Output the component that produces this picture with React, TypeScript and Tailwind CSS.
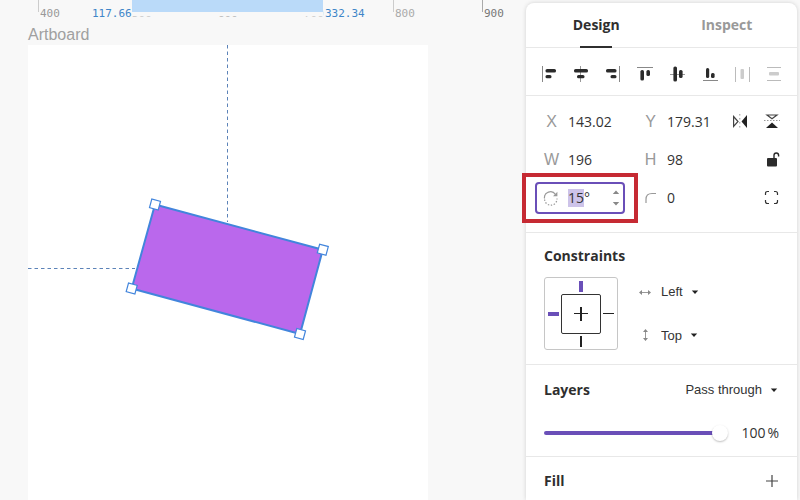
import { useEffect, useRef, type ReactNode } from "react";

const PURPLE = "#6a4fb8";
const BLUE = "#4285dc";

function Bar({ x, y, w, h, c = "#2b2b2b", r = 0 }: { x: number; y: number; w: number; h: number; c?: string; r?: number }) {
  return <rect x={x} y={y} width={w} height={h} rx={r} fill={c} />;
}

const alignments: { label: string; disabled?: boolean; art: ReactNode }[] = [
  { label: "Align left", art: <><Bar x={1} y={0} w={1} h={16} c="#888" /><Bar x={4.5} y={3} w={10.5} h={3.6} r={1.6} /><Bar x={4.5} y={9} w={6} h={3.2} r={1.5} /></> },
  { label: "Align horizontal centers", art: <><Bar x={7} y={0} w={1} h={16} c="#999" /><Bar x={1} y={3} w={14} h={3.6} r={1.6} /><Bar x={4} y={9} w={7.5} h={3.2} r={1.5} /></> },
  { label: "Align right", art: <><Bar x={14} y={0} w={1} h={16} c="#888" /><Bar x={1} y={3} w={10.5} h={3.6} r={1.6} /><Bar x={5.5} y={9} w={6} h={3.2} r={1.5} /></> },
  { label: "Align top", art: <><Bar x={0} y={1} w={16} h={1} c="#888" /><Bar x={3.4} y={4} w={3.6} h={10.5} r={1.6} /><Bar x={9.4} y={4} w={3.6} h={6} r={1.6} /></> },
  { label: "Align vertical centers", art: <><Bar x={0} y={8} w={15} h={1} c="#999" /><Bar x={3.4} y={0.5} w={3.6} h={15} r={1.6} /><Bar x={9} y={4} w={3.6} h={8} r={1.6} /></> },
  { label: "Align bottom", art: <><Bar x={1} y={14} w={15} h={1} c="#888" /><Bar x={4} y={2} w={3.2} h={10} r={1.5} /><Bar x={9} y={7} w={3.6} h={5} r={1.5} /></> },
  { label: "Distribute horizontally", disabled: true, art: <><Bar x={1} y={1} w={1} h={15} c="#bbb" /><Bar x={6.5} y={3} w={3.5} h={10} c="#ccc" r={1} /><Bar x={15} y={1} w={1} h={15} c="#bbb" /></> },
  { label: "Distribute vertically", disabled: true, art: <><Bar x={1} y={1} w={14} h={1} c="#bbb" /><Bar x={3} y={6} w={10} h={3.5} c="#ccc" r={1} /><Bar x={1} y={14} w={14} h={1} c="#bbb" /></> },
];

function Caret() {
  return (
    <svg className="pointer-events-none -ml-2 h-2 w-2" viewBox="0 0 8 8" aria-hidden="true">
      <path d="M.8 2.5h6.4L4 6z" fill="#222" />
    </svg>
  );
}

function Dropdown({ label, options }: { label: string; options: string[] }) {
  return (
    <span className="flex items-center">
      <select
        aria-label={label}
        className="appearance-none bg-transparent pr-4 font-['Liberation_Sans',Arial,sans-serif] text-[13px] text-[#333] [field-sizing:content]"
      >
        {options.map((o) => <option key={o}>{o}</option>)}
      </select>
      <Caret />
    </span>
  );
}

function Field({ label, name, value }: { label: ReactNode; name: string; value: string }) {
  return (
    <label className="flex h-[38px] items-center">
      <span className="flex w-[33px] justify-center font-['Liberation_Sans',Arial,sans-serif] text-base text-[#999]">{label}</span>
      <input aria-label={name} defaultValue={value} className="w-14 bg-transparent text-sm text-[#333] outline-none" />
    </label>
  );
}

function RotationField() {
  const input = useRef<HTMLInputElement>(null);
  useEffect(() => {
    input.current?.focus();
    input.current?.setSelectionRange(0, 2);
  }, []);
  return (
    <div className="relative flex h-[38px] w-[90px] items-center">
      <label className="flex h-8 w-full items-center rounded border-2 border-[#6a4fb8] bg-white">
        <svg className="ml-[6px] h-4 w-4" viewBox="0 0 16 16" fill="none" stroke="#999" aria-hidden="true">
          <path d="M1.5 8.5A6 6 0 0 1 12.5 4.5" strokeWidth="1.2" />
          <path d="M14.4 1.8v4.5H10z" fill="#999" stroke="none" />
          <path d="M1.6 9.5A6.2 6.2 0 0 0 14 8.5" strokeWidth="1.2" strokeDasharray="1.4 1.6" />
        </svg>
        <input
          ref={input}
          aria-label="Rotation"
          defaultValue="15°"
          className="ml-[9px] w-11 bg-transparent text-sm leading-[18px] text-[#333] outline-none selection:bg-[#cdc3e9] selection:text-[#333]"
        />
        <svg className="h-5 w-2" viewBox="0 0 8 20" fill="#888" aria-hidden="true">
          <path d="M.8 6h6.4L4 2.500zM.8 14h6.4L4 17.500z" />
        </svg>
      </label>
      <span className="pointer-events-none absolute -inset-x-[13px] -inset-y-[6px] border-4 border-[#c62a33]" />
    </div>
  );
}

function IconButton({ label, children }: { label: string; children: ReactNode }) {
  return (
    <button aria-label={label} className="flex h-[38px] w-8 items-center justify-center">
      <svg className="h-4 w-4" viewBox="0 0 16 16" aria-hidden="true">{children}</svg>
    </button>
  );
}

function Section({ className, children }: { className: string; children: ReactNode }) {
  return <section className={`border-b border-[#e8e8e8] ${className}`}>{children}</section>;
}

function Heading({ children }: { children: ReactNode }) {
  return <h2 className="text-sm leading-5 font-bold text-[#2f2f2f]">{children}</h2>;
}

function Ruler() {
  return (
    <div className="relative h-5 shrink-0 font-['DejaVu_Sans_Mono',monospace] text-[11px] leading-3 text-[#999]">
      <span className="absolute top-0 left-[38px] h-3 w-px bg-[#ccc]" />
      <span className="absolute top-2 left-10">400</span>
      <span className="absolute top-2 left-[132px] text-[#ccc]">500</span>
      <span className="absolute top-2 left-[218px] text-[#bbb]">600</span>
      <span className="absolute top-2 left-[304px] text-[#ccc]">700</span>
      <span className="absolute top-0 left-[393px] h-3 w-px bg-[#ccc]" />
      <span className="absolute top-2 left-[395px] text-[#aaa]">800</span>
      <span className="absolute top-0 left-[482px] h-3 w-px bg-[#aaa]" />
      <span className="absolute top-2 left-[484px] text-[#777]">900</span>
      <span className="absolute top-0 left-[132px] h-4 w-[191px] border-b-4 border-[#f8f8f8] bg-[#badaf9]" />
      <span className="absolute top-2 left-[92px] text-[#3f86c8]">117.66</span>
      <span className="absolute top-2 left-[325px] text-[#3f86c8]">332.34</span>
    </div>
  );
}

function Drawing() {
  const corners = [[127, 159.5], [294.8, 204.7], [272, 289], [103.7, 243.5]];
  return (
    <svg className="h-[455px] w-[400px]" viewBox="0 0 400 455" role="img" aria-label="Rotated rectangle">
      <path d="M199.5 0V177M0 223.5H107" stroke="#5c83b8" strokeDasharray="3.5 3" fill="none" />
      <polygon points={corners.map((c) => c.join(",")).join(" ")} fill="#ba68ec" stroke={BLUE} strokeWidth="2" />
      {corners.map(([x, y]) => (
        <rect key={x} x={x - 4.5} y={y - 4.5} width="9" height="9" fill="#fff" stroke={BLUE} strokeWidth="1.2" transform={`rotate(15 ${x} ${y})`} />
      ))}
    </svg>
  );
}

export default function App() {
  return (
    <div className="flex h-screen overflow-hidden bg-[#f8f8f8] font-['Open_Sans','Noto_Sans',sans-serif]">
      <main className="flex min-w-0 flex-1 flex-col overflow-hidden">
        <Ruler />
        <div className="pt-[5px] pl-7">
          <h1 className="font-['Liberation_Sans',Arial,sans-serif] text-base leading-5 text-[#a0a0a0]">Artboard</h1>
          <div className="w-[400px] bg-white"><Drawing /></div>
        </div>
      </main>

      <aside className="mt-[3px] mr-[3px] w-[271px] shrink-0 rounded-t-lg bg-white shadow-[0_0_4px_rgba(0,0,0,0.16)]">
        <div role="tablist" className="flex h-[45px] items-stretch border-b border-[#e8e8e8] px-[5px] text-sm">
          <button role="tab" aria-selected="true" className="relative flex-1 font-bold text-[#2f2f2f]">
            Design
            <span className="absolute -bottom-px left-1/2 h-[2px] w-8 -translate-x-1/2 bg-[#2f2f2f]" />
          </button>
          <button role="tab" aria-selected="false" className="flex-1 font-bold text-[#999]">Inspect</button>
        </div>

        <Section className="flex h-12 items-center justify-between px-[7px] pt-1">
          {alignments.map((a) => (
            <button key={a.label} aria-label={a.label} disabled={a.disabled} className="flex h-8 w-8 items-center justify-center">
              <svg className="h-4 w-4" viewBox="0 0 16 16" aria-hidden="true">{a.art}</svg>
            </button>
          ))}
        </Section>

        <Section className="grid grid-cols-[99px_90px_32px_32px] pt-[7px] pb-[15px] pl-[9px]">
          <Field label="X" name="X position" value="143.02" />
          <Field label="Y" name="Y position" value="179.31" />
          <IconButton label="Flip horizontally">
            <path d="M1.600 2.500l4.400 5-4.400 5z" fill="none" stroke="#444" strokeWidth="1.200" />
            <path d="M15 1v13L9.500 7.500z" fill="#222" />
            <path d="M7.800 0v15" stroke="#999" strokeDasharray="1.500 2.500" />
          </IconButton>
          <IconButton label="Flip vertically">
            <path d="M3 1h10L8 4.800z" fill="none" stroke="#444" strokeWidth="1.200" />
            <path d="M2 14h12L8 8.500z" fill="#222" />
            <path d="M0 6.500h16" stroke="#999" strokeDasharray="1.500 1.500" />
          </IconButton>
          <Field label="W" name="Width" value="196" />
          <Field label="H" name="Height" value="98" />
          <span />
          <IconButton label="Unlock proportions">
            <rect x="3" y="6" width="10" height="8.500" rx="1" fill="#2b2b2b" />
            <path d="M10 6.500V3.300a2.300 2.300 0 0 1 4.600 0V4.500" fill="none" stroke="#2b2b2b" strokeWidth="1.400" />
          </IconButton>
          <RotationField />
          <Field
            name="Corner radius"
            value="0"
            label={
              <svg className="h-4 w-4" viewBox="0 0 16 16" fill="none" stroke="#999" aria-hidden="true">
                <path d="M3 13V9.500Q3 3.500 9 3.500H13" strokeWidth="1.200" />
              </svg>
            }
          />
          <span />
          <IconButton label="Edit corners separately">
            <path d="M1.500 5V3.500q0-2 2-2H5M10 1.500h1.500q2 0 2 2V5M13.500 10v1.500q0 2-2 2H10M5 13.500H3.500q-2 0-2-2V10" fill="none" stroke="#333" strokeWidth="1.200" />
          </IconButton>
        </Section>

        <Section className="px-[18px] pt-[13px] pb-[13px]">
          <Heading>Constraints</Heading>
          <div className="mt-[11px] flex">
            <svg className="h-[74px] w-[74px]" viewBox="0 0 74 74" fill="none" role="img" aria-label="Pinned left and top">
              <rect x=".5" y=".5" width="73" height="72" rx="2.500" stroke="#c6c6c6" />
              <rect x="17.500" y="17.500" width="39" height="39" rx="1.500" stroke="#333" />
              <Bar x={35} y={4} w={4} h={11} c={PURPLE} />
              <Bar x={4} y={35} w={11} h={4} c={PURPLE} />
              <Bar x={59} y={36} w={11} h={1} c="#222" />
              <Bar x={36} y={59} w={2} h={11} c="#222" />
              <Bar x={30} y={36} w={14} h={1} c="#222" />
              <Bar x={36} y={30} w={2} h={14} c="#222" />
            </svg>
            <div className="ml-[19px] flex flex-col justify-between pt-[5px] pb-[6px]">
              <div className="flex items-center gap-2">
                <svg className="h-4 w-4" viewBox="0 0 16 16" aria-hidden="true">
                  <path d="M4 8.500h8" stroke="#999" /><path d="M2 8.500l3-2.500v5zM14 8.500l-3-2.500v5z" fill="#888" />
                </svg>
                <Dropdown label="Horizontal constraint" options={["Left", "Right", "Center", "Scale"]} />
              </div>
              <div className="flex items-center gap-2">
                <svg className="h-4 w-4" viewBox="0 0 16 16" aria-hidden="true">
                  <path d="M8.500 4v8" stroke="#999" /><path d="M8.500 2l-2.500 3h5zM8.500 14l-2.500-3h5z" fill="#888" />
                </svg>
                <Dropdown label="Vertical constraint" options={["Top", "Bottom", "Center", "Scale"]} />
              </div>
            </div>
          </div>
        </Section>

        <Section className="px-[18px] pt-[15px] pb-[13px]">
          <div className="flex h-5 items-center justify-between pr-px">
            <Heading>Layers</Heading>
            <Dropdown label="Blend mode" options={["Pass through", "Normal", "Multiply"]} />
          </div>
          <div className="mt-[23px] flex h-5 items-center justify-between">
            <input
              type="range"
              aria-label="Layer opacity"
              defaultValue={100}
              className="h-4 w-[184px] appearance-none bg-transparent [&::-webkit-slider-runnable-track]:h-1 [&::-webkit-slider-runnable-track]:rounded-full [&::-webkit-slider-runnable-track]:bg-linear-to-r [&::-webkit-slider-runnable-track]:from-[#6a4fb8] [&::-webkit-slider-runnable-track]:from-94% [&::-webkit-slider-runnable-track]:to-transparent [&::-webkit-slider-runnable-track]:to-94% [&::-webkit-slider-thumb]:-mt-[6px] [&::-webkit-slider-thumb]:h-4 [&::-webkit-slider-thumb]:w-4 [&::-webkit-slider-thumb]:appearance-none [&::-webkit-slider-thumb]:rounded-full [&::-webkit-slider-thumb]:bg-white [&::-webkit-slider-thumb]:shadow-[0_1px_2px_rgba(0,0,0,0.25)]"
            />
            <span className="flex gap-[2px] text-sm text-[#333]"><span>100</span><span>%</span></span>
          </div>
        </Section>

        <section className="flex items-center justify-between py-[14px] pr-[17px] pl-[18px]">
          <Heading>Fill</Heading>
          <button aria-label="Add fill">
            <svg className="h-4 w-4" viewBox="0 0 16 16" aria-hidden="true">
              <path d="M8 2v12M2 8h12" stroke="#444" strokeWidth="1.200" />
            </svg>
          </button>
        </section>
      </aside>
    </div>
  );
}
